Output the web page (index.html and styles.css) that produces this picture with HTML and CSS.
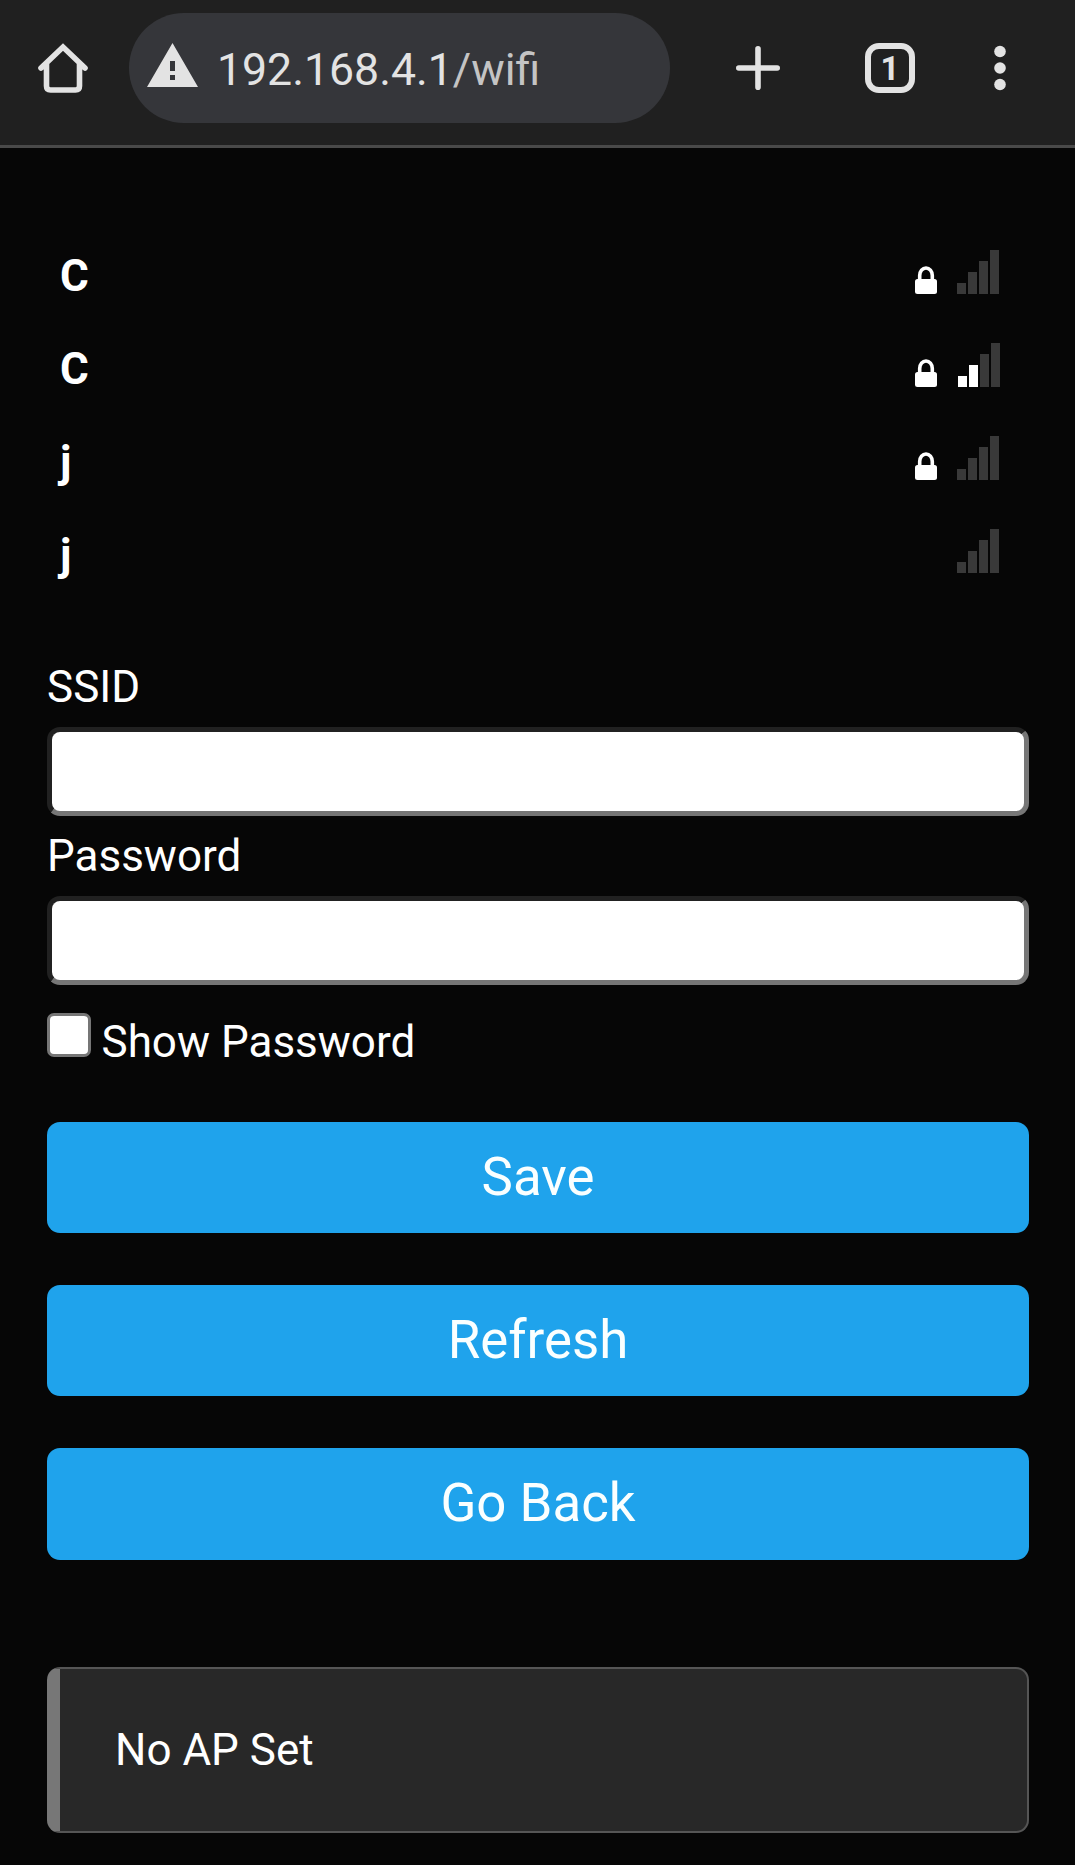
FILE: index.html
```html
<!DOCTYPE html>
<html lang="en">
<head>
<meta charset="utf-8">
<title>WiFi configuration</title>
<link rel="stylesheet" href="styles.css">
</head>
<body>
<header class="toolbar">
  <svg class="home" width="50" height="50" viewBox="0 0 50 50"><path d="M3 25 25 4 47 25M8.500 20V43Q8.500 47 12.500 47H37.500Q41.500 47 41.500 43V20" fill="none" stroke="#e3e3e3" stroke-width="5.600" stroke-linecap="round"/></svg>
  <div class="address">
    <svg class="warning" width="51" height="44" viewBox="0 0 51 44"><path fill="#e3e3e3" fill-rule="evenodd" d="M25.500 0 51 44H0ZM23 18V28H28V18ZM23 32V37H28V32Z"/></svg>
    <span class="url">192.168.4.1<span class="path">/wifi</span></span>
  </div>
  <svg class="plus" width="44" height="44" viewBox="0 0 44 44"><path d="M22 2.800V41.200M2.800 22H41.200" stroke="#e3e3e3" stroke-width="5.600" stroke-linecap="round"/></svg>
  <span class="tabs">1</span>
  <svg class="menu" width="12" height="46" viewBox="0 0 12 46" fill="#e3e3e3"><circle cx="6" cy="6.500" r="5.800"/><circle cx="6" cy="23" r="5.800"/><circle cx="6" cy="39.500" r="5.800"/></svg>
</header>
<main class="page">
  <ul class="networks">
    <li class="network"><span class="name">C</span>
      <svg class="lock" width="22" height="28" viewBox="0 0 22 28"><path d="M4.700 14V9.500a6.300 7.500 0 0 1 12.600 0V14" fill="none" stroke="#fff" stroke-width="3.600"/><rect y="13" width="22" height="15" rx="2.500" fill="#fff"/></svg>
      <span class="signal"><i></i><i></i><i></i><i></i></span></li>
    <li class="network"><span class="name">C</span>
      <svg class="lock" width="22" height="28" viewBox="0 0 22 28"><path d="M4.700 14V9.500a6.300 7.500 0 0 1 12.600 0V14" fill="none" stroke="#fff" stroke-width="3.600"/><rect y="13" width="22" height="15" rx="2.500" fill="#fff"/></svg>
      <span class="signal level-2"><i></i><i></i><i></i><i></i></span></li>
    <li class="network"><span class="name">j</span>
      <svg class="lock" width="22" height="28" viewBox="0 0 22 28"><path d="M4.700 14V9.500a6.300 7.500 0 0 1 12.600 0V14" fill="none" stroke="#fff" stroke-width="3.600"/><rect y="13" width="22" height="15" rx="2.500" fill="#fff"/></svg>
      <span class="signal"><i></i><i></i><i></i><i></i></span></li>
    <li class="network"><span class="name">j</span>
      <span class="signal"><i></i><i></i><i></i><i></i></span></li>
  </ul>
  <form class="form">
    <label class="label" for="ssid">SSID</label>
    <input class="field" id="ssid" type="text">
    <label class="label" for="password">Password</label>
    <input class="field" id="password" type="password">
    <label class="show"><input class="check" type="checkbox"><span>Show Password</span></label>
    <button class="button" type="button">Save</button>
    <button class="button" type="button">Refresh</button>
    <button class="button" type="button">Go Back</button>
  </form>
  <div class="message">No AP Set</div>
</main>
</body>
</html>
```
FILE: styles.css
```css
* { box-sizing: border-box; }
body {
  margin: 0;
  min-height: 1865px;
  background: #060606;
  color: #fff;
  font: 44px/66px Roboto, sans-serif;
}
.toolbar {
  display: flex;
  align-items: center;
  height: 148px;
  padding: 0 0 9px 38px;
  background: #202020;
  border-bottom: 3px solid #494949;
}
.toolbar > * { flex: none; }
.address {
  display: flex;
  align-items: center;
  width: 541px;
  height: 110px;
  margin-left: 41px;
  padding-left: 18px;
  border-radius: 55px;
  background: #35363a;
}
.warning { margin-top: -6px; }
.url {
  margin-left: 19px;
  padding-top: 4px;
  color: #e3e3e3;
  font-size: 44.600px;
  white-space: nowrap;
}
.path { color: #c4c4c4; }
.plus { margin-left: 66px; }
.tabs {
  width: 50px;
  height: 50px;
  margin-left: 85px;
  border: 6px solid #e3e3e3;
  border-radius: 14px;
  color: #e3e3e3;
  font-size: 33px;
  font-weight: 700;
  line-height: 40px;
  text-align: center;
}
.menu { margin-left: 79px; }
.page { padding: 80px 46px 0 47px; }
.networks { margin: 0; padding: 0 30px 0 13px; list-style: none; }
.network { display: flex; align-items: flex-end; height: 93px; padding-bottom: 27px; }
.name { flex: 1; height: 66px; margin-bottom: -15px; font-weight: 700; }
.signal { display: flex; align-items: flex-end; gap: 2.200px; width: 42px; margin-left: 20px; }
.signal i { width: 8.800px; height: 11px; background: #393939; }
.signal i:nth-child(2) { height: 22px; }
.signal i:nth-child(3) { height: 33px; }
.signal i:nth-child(4) { height: 44px; }
.level-2 { margin-right: -1px; margin-left: 21px; }
.level-2 i:nth-child(-n+2) { background: #fff; }
.form { padding-top: 54px; }
.label { display: block; height: 66px; margin-bottom: 7px; }
.field {
  display: block;
  width: 100%;
  height: 89px;
  margin: 0 0 7px;
  border: 5px solid;
  border-color: #212121 #767676 #767676 #212121;
  border-radius: 13px;
  background: #fff;
}
.show { display: flex; align-items: flex-start; height: 66px; margin-top: 24px; }
.check {
  appearance: none;
  width: 44px;
  height: 44px;
  margin: 4px 10.500px 0 0;
  border: 3px solid #767676;
  border-radius: 7px;
  background: #fff;
}
.button {
  display: block;
  width: 100%;
  height: 111px;
  margin: 0 0 52px;
  padding: 0 0 2px;
  border: 0;
  border-radius: 13px;
  background: #1fa3ec;
  color: #faffff;
  font: 52.800px Roboto, sans-serif;
}
.button:last-child { height: 112px; }
.show + .button { margin-top: 47px; }
.message {
  height: 166px;
  margin-top: 107px;
  padding-left: 55px;
  border: 2px solid #555;
  border-left: 13px solid #777;
  border-radius: 13px;
  background: #282828;
  line-height: 162px;
}
```
